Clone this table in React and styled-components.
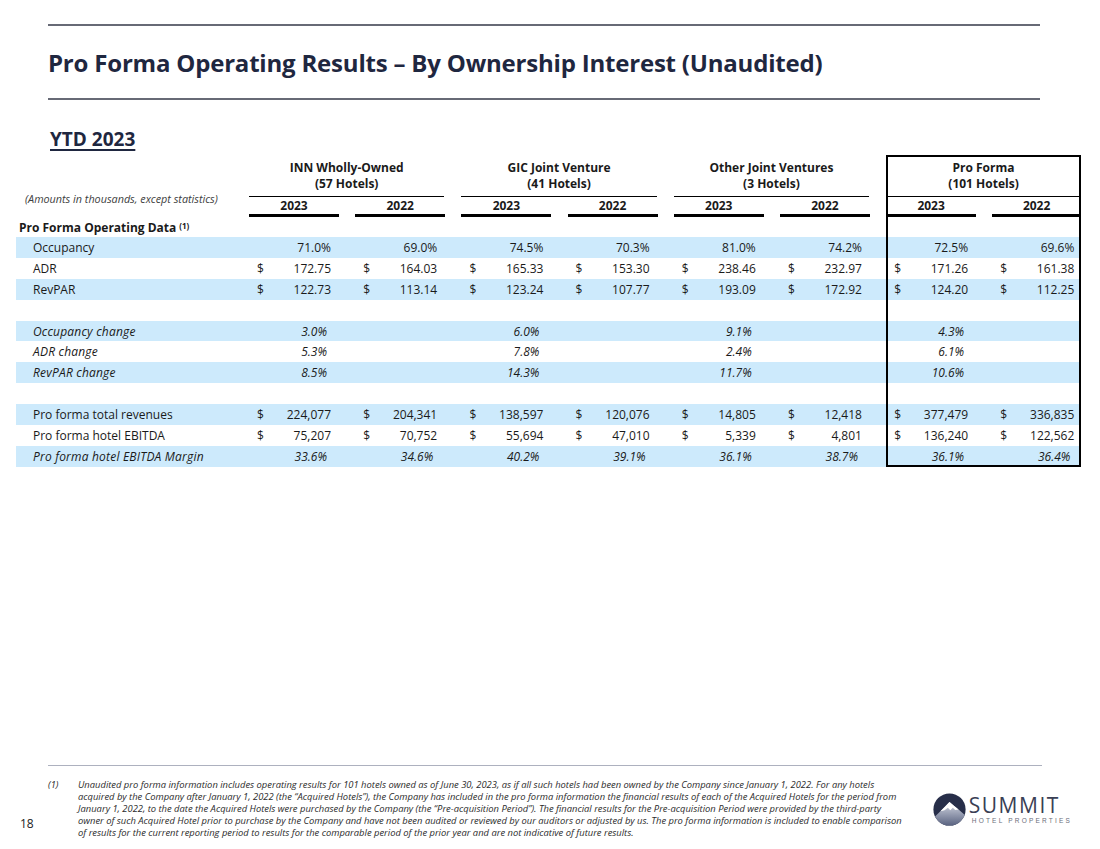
import styled, { createGlobalStyle } from "styled-components";

const COLS = "233px repeat(7, 106.2px) 88.6px";
const INK = "#1f2740";
const BAND = "#cdeafc";

const GlobalStyle = createGlobalStyle`
  html, body {
    margin: 0;
    padding: 0;
    background: #fff;
  }
  body {
    font-family: "Open Sans", "Noto Sans", Arial, sans-serif;
    color: #1a1a1a;
  }
`;

const Page = styled.div`
  width: 1100px;
  min-height: 849px;
  display: flex;
  flex-direction: column;
  box-sizing: border-box;
  padding-bottom: 10px;
`;

const Header = styled.header`
  margin: 24px 60px 0 48px;
`;

const Rule = styled.div`
  height: 2px;
  background: #676a76;
`;

const Title = styled.h1`
  margin: 0;
  height: 72px;
  display: flex;
  align-items: center;
  font-size: 24px;
  font-weight: 700;
  letter-spacing: -0.2px;
  color: ${INK};
`;

const Ytd = styled.h2`
  margin: 27px 0 0 50px;
  font-size: 19px;
  line-height: 24px;
  font-weight: 700;
  color: ${INK};
  text-decoration: underline;
  text-decoration-thickness: 2px;
  text-underline-offset: 3px;
`;

const Table = styled.div`
  margin: 4px 0 0 16px;
  width: 1065px;
  font-size: 12px;
`;

const HeadGrid = styled.div`
  display: grid;
  grid-template-columns: ${COLS};
  grid-template-rows: 42px 20px;
`;

const Amounts = styled.div`
  grid-column: 1;
  grid-row: 1 / 3;
  align-self: end;
  padding: 0 0 11px 9px;
  font-size: 10.8px;
  font-style: italic;
  color: #404040;
`;

const boxShadow = ({ $edge, $closed, $top }) => {
  const s = [];
  if ($edge === "left" || $edge === "both") s.push("inset 2px 0 0 #000");
  if ($edge === "right" || $edge === "both") s.push("inset -2px 0 0 #000");
  if ($closed) s.push("inset 0 -2px 0 #000");
  if ($top) s.push("inset 0 2px 0 #000");
  return s.length ? s.join(", ") : "none";
};

const Group = styled.div`
  grid-row: 1;
  grid-column: span 2;
  margin-right: ${(p) => (p.$edge ? 0 : 17)}px;
  padding-top: 5px;
  box-sizing: border-box;
  border-bottom: 1.5px solid #000;
  box-shadow: ${boxShadow};
  text-align: center;
  font-weight: 700;
  line-height: 15.5px;
`;

const YearCell = styled.div`
  grid-row: 2;
  display: flex;
  box-shadow: ${boxShadow};
`;

const Year = styled.div`
  width: ${(p) => (p.$full ? "100%" : "90px")};
  height: 20px;
  box-sizing: border-box;
  border-bottom: 3px solid #000;
  text-align: center;
  font-weight: 700;
  line-height: 18px;
`;

const Row = styled.div`
  display: grid;
  grid-template-columns: ${COLS};
  height: ${(p) => p.$h || 20.9}px;
  background: ${(p) => (p.$shade ? BAND : "transparent")};
`;

const Label = styled.div`
  display: flex;
  align-items: center;
  padding-left: ${(p) => (p.$head ? 3 : 17)}px;
  font-weight: ${(p) => (p.$head ? 700 : 400)};
  font-style: ${(p) => (p.$italic ? "italic" : "normal")};
  letter-spacing: ${(p) => (p.$italic ? "0.2px" : "0")};
  white-space: nowrap;

  sup {
    font-size: 8px;
    margin-left: 3px;
    position: relative;
    top: -2px;
  }
`;

const Cell = styled.div`
  display: flex;
  align-items: center;
  box-shadow: ${boxShadow};
`;

const Value = styled.div`
  width: 82px;
  box-sizing: border-box;
  padding-left: 8px;
  padding-right: ${(p) => (p.$italic ? 4 : 0)}px;
  display: flex;
  justify-content: ${(p) => (p.$dollar ? "space-between" : "flex-end")};
  font-style: ${(p) => (p.$italic ? "italic" : "normal")};
  white-space: nowrap;
`;

const Footer = styled.footer`
  margin-top: auto;
`;

const FootRule = styled.div`
  margin: 0 58px 0 48px;
  height: 1.5px;
  background: #adb1bf;
`;

const FootBody = styled.div`
  display: flex;
  align-items: center;
  margin-top: 13px;
`;

const PageNum = styled.div`
  width: 48px;
  box-sizing: border-box;
  padding-left: 20px;
  align-self: flex-end;
  margin-bottom: 8px;
  font-size: 12px;
  line-height: 14px;
  color: #222;
`;

const NoteMark = styled.div`
  width: 30px;
  align-self: flex-start;
  font-size: 9.4px;
  line-height: 12px;
  font-style: italic;
  color: #2b2b2b;
`;

const NoteText = styled.div`
  font-size: 9.4px;
  line-height: 12px;
  font-style: italic;
  color: #2b2b2b;
  white-space: nowrap;
`;

const Logo = styled.div`
  margin-left: auto;
  margin-right: 28px;
  display: flex;
  align-items: center;
  gap: 3px;
`;

const LogoWords = styled.div`
  display: flex;
  flex-direction: column;
  align-items: flex-start;
`;

const LogoName = styled.span`
  font-size: 21px;
  line-height: 22px;
  letter-spacing: 1.5px;
  color: #3a3f55;
`;

const LogoSub = styled.span`
  font-family: "Liberation Sans", Arial, sans-serif;
  font-size: 6.5px;
  line-height: 9px;
  letter-spacing: 2.2px;
  color: #6b6e7a;
  padding-left: 3px;
`;

const groups = [
  ["INN Wholly-Owned", "(57 Hotels)"],
  ["GIC Joint Venture", "(41 Hotels)"],
  ["Other Joint Ventures", "(3 Hotels)"],
  ["Pro Forma", "(101 Hotels)"],
];

const rows = [
  { label: "Occupancy", kind: "pct", vals: ["71.0%", "69.0%", "74.5%", "70.3%", "81.0%", "74.2%", "72.5%", "69.6%"] },
  { label: "ADR", kind: "usd", vals: ["172.75", "164.03", "165.33", "153.30", "238.46", "232.97", "171.26", "161.38"] },
  { label: "RevPAR", kind: "usd", vals: ["122.73", "113.14", "123.24", "107.77", "193.09", "172.92", "124.20", "112.25"] },
  { blank: true },
  { label: "Occupancy change", kind: "chg", vals: ["3.0%", "", "6.0%", "", "9.1%", "", "4.3%", ""] },
  { label: "ADR change", kind: "chg", vals: ["5.3%", "", "7.8%", "", "2.4%", "", "6.1%", ""] },
  { label: "RevPAR change", kind: "chg", vals: ["8.5%", "", "14.3%", "", "11.7%", "", "10.6%", ""] },
  { blank: true },
  { label: "Pro forma total revenues", kind: "usd", vals: ["224,077", "204,341", "138,597", "120,076", "14,805", "12,418", "377,479", "336,835"] },
  { label: "Pro forma hotel EBITDA", kind: "usd", vals: ["75,207", "70,752", "55,694", "47,010", "5,339", "4,801", "136,240", "122,562"] },
  { label: "Pro forma hotel EBITDA Margin", kind: "chg", vals: ["33.6%", "34.6%", "40.2%", "39.1%", "36.1%", "38.7%", "36.1%", "36.4%"] },
];

const edgeOf = (i) => (i === 6 ? "left" : i === 7 ? "right" : undefined);

const noteLines = [
  "Unaudited pro forma information includes operating results for 101 hotels owned as of June 30, 2023, as if all such hotels had been owned by the Company since January 1, 2022. For any hotels",
  "acquired by the Company after January 1, 2022 (the \u201cAcquired Hotels\u201d), the Company has included in the pro forma information the financial results of each of the Acquired Hotels for the period from",
  "January 1, 2022, to the date the Acquired Hotels were purchased by the Company (the \u201cPre-acquisition Period\u201d). The financial results for the Pre-acquisition Period were provided by the third-party",
  "owner of such Acquired Hotel prior to purchase by the Company and have not been audited or reviewed by our auditors or adjusted by us. The pro forma information is included to enable comparison",
  "of results for the current reporting period to results for the comparable period of the prior year and are not indicative of future results.",
];

function MountainMark() {
  return (
    <svg width="33" height="33" viewBox="0 0 40 40">
      <defs>
        <clipPath id="disc">
          <circle cx="20" cy="20" r="19.5" />
        </clipPath>
        <linearGradient id="slope" x1="0" y1="0" x2="0" y2="1">
          <stop offset="0" stopColor="#d4d8e3" />
          <stop offset="1" stopColor="#58617f" />
        </linearGradient>
      </defs>
      <g clipPath="url(#disc)">
        <rect width="40" height="40" fill="#272e49" />
        <path d="M0 31 L9 22 L15 16 L20 11 L25 15 L31 20 L40 28 V40 H0 Z" fill="url(#slope)" />
        <path d="M9 22 L15 16 L20 11 L25 15 L31 20 L27 20.5 L24 18 L21 21 L18 18 L14 21 Z" fill="#fff" />
      </g>
    </svg>
  );
}

function DataRow({ row, shade, last }) {
  return (
    <Row $shade={shade}>
      <Label $italic={row.kind === "chg"}>{row.label}</Label>
      {Array.from({ length: 8 }).map((_, i) => {
        const v = row.blank ? "" : row.vals[i];
        return (
          <Cell key={i} $edge={edgeOf(i)} $closed={last && i >= 6}>
            {v && (
              <Value $dollar={row.kind === "usd"} $italic={row.kind === "chg"}>
                {row.kind === "usd" && <span>$</span>}
                <span>{v}</span>
              </Value>
            )}
          </Cell>
        );
      })}
    </Row>
  );
}

export default function App() {
  return (
    <Page>
      <GlobalStyle />
      <Header>
        <Rule />
        <Title>Pro Forma Operating Results – By Ownership Interest (Unaudited)</Title>
        <Rule />
      </Header>

      <Ytd>YTD 2023</Ytd>

      <Table>
        <HeadGrid>
          <Amounts>(Amounts in thousands, except statistics)</Amounts>
          {groups.map(([name, count], g) => (
            <Group key={name} $edge={g === 3 ? "both" : undefined} $top={g === 3}>
              {name}
              <br />
              {count}
            </Group>
          ))}
          {Array.from({ length: 8 }).map((_, i) => (
            <YearCell key={i} $edge={edgeOf(i)}>
              <Year $full={i === 7}>{i % 2 === 0 ? "2023" : "2022"}</Year>
            </YearCell>
          ))}
        </HeadGrid>

        <Row $h={20}>
          <Label $head>
            Pro Forma Operating Data<sup>(1)</sup>
          </Label>
          {Array.from({ length: 8 }).map((_, i) => (
            <Cell key={i} $edge={edgeOf(i)} />
          ))}
        </Row>

        {rows.map((row, r) => (
          <DataRow key={r} row={row} shade={r % 2 === 0} last={r === rows.length - 1} />
        ))}
      </Table>

      <Footer>
        <FootRule />
        <FootBody>
          <PageNum>18</PageNum>
          <NoteMark>(1)</NoteMark>
          <NoteText>
            {noteLines.map((line) => (
              <div key={line}>{line}</div>
            ))}
          </NoteText>
          <Logo>
            <MountainMark />
            <LogoWords>
              <LogoName>SUMMIT</LogoName>
              <LogoSub>HOTEL PROPERTIES</LogoSub>
            </LogoWords>
          </Logo>
        </FootBody>
      </Footer>
    </Page>
  );
}
